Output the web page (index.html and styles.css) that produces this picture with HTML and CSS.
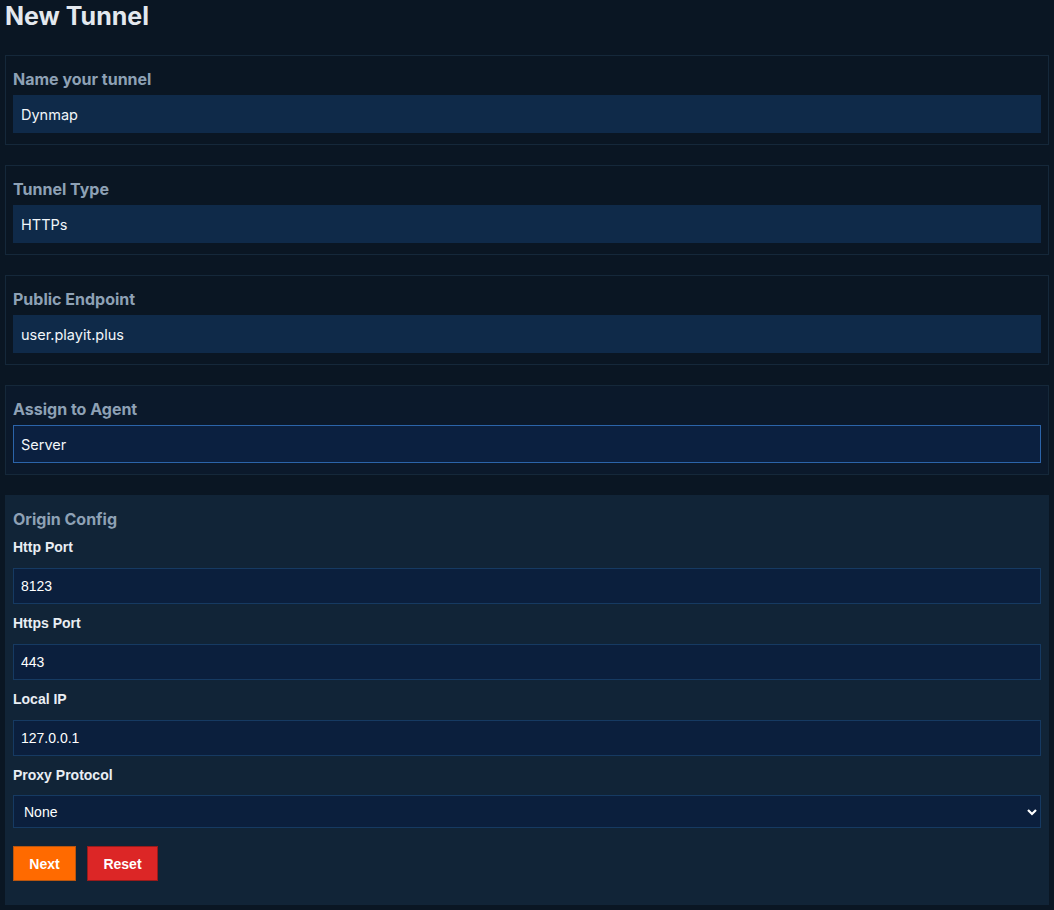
FILE: index.html
```html
<!DOCTYPE html>
<html lang="en">
<head>
<meta charset="utf-8">
<title>New Tunnel</title>
<link rel="stylesheet" href="styles.css">
</head>
<body>
<main class="page">
  <h1 class="page-title">New Tunnel</h1>

  <section class="card">
    <label class="card-label" for="tunnel-name">Name your tunnel</label>
    <input id="tunnel-name" class="field" type="text" value="Dynmap">
  </section>

  <section class="card">
    <label class="card-label" for="tunnel-type">Tunnel Type</label>
    <input id="tunnel-type" class="field" type="text" value="HTTPs">
  </section>

  <section class="card">
    <label class="card-label" for="endpoint">Public Endpoint</label>
    <input id="endpoint" class="field" type="text" value="user.playit.plus">
  </section>

  <section class="card card-active">
    <label class="card-label" for="agent">Assign to Agent</label>
    <input id="agent" class="field field-focused" type="text" value="Server">
  </section>

  <section class="origin">
    <h2 class="origin-title">Origin Config</h2>

    <label class="origin-label" for="http-port">Http Port</label>
    <input id="http-port" class="origin-input" type="text" value="8123">

    <label class="origin-label" for="https-port">Https Port</label>
    <input id="https-port" class="origin-input" type="text" value="443">

    <label class="origin-label" for="local-ip">Local IP</label>
    <input id="local-ip" class="origin-input" type="text" value="127.0.0.1">

    <label class="origin-label origin-label-select" for="proxy">Proxy Protocol</label>
    <div class="select-wrap">
      <select id="proxy" class="origin-select">
        <option>None</option>
      </select>
      <svg class="select-chevron" width="10" height="8" viewBox="0 0 10 8" aria-hidden="true">
        <path d="M1 2 L5 6 L9 2" fill="none" stroke="#ffffff" stroke-width="2.2"/>
      </svg>
    </div>

    <div class="actions">
      <button class="btn btn-next" type="button">Next</button>
      <button class="btn btn-reset" type="button">Reset</button>
    </div>
  </section>
</main>
</body>
</html>
```

FILE: styles.css
```css
html, body {
  margin: 0;
  padding: 0;
  background: #0a1623;
}

body {
  font-family: Inter, "Noto Sans", sans-serif;
  color: #e6edf5;
}

.page {
  padding: 0 5px 5px 5px;
  display: flex;
  flex-direction: column;
}

.page-title {
  margin: 0;
  font-size: 25px;
  font-weight: 700;
  line-height: 32px;
  color: #e3e8ee;
  height: 55px;
}

.card {
  display: flex;
  flex-direction: column;
  border: 1px solid #15283a;
  padding: 11px 7px 11px 7px;
  margin-bottom: 20px;
  background: #0a1623;
}

.card-active {
  background: #0b192b;
}

.card-label {
  font-size: 16px;
  font-weight: 700;
  line-height: 24px;
  color: #8ea1b5;
  margin-bottom: 4px;
}

.field {
  display: block;
  box-sizing: border-box;
  width: 100%;
  height: 38px;
  margin: 0;
  padding: 0 8px;
  border: none;
  outline: none;
  background: #0f2a49;
  color: #f2f6fa;
  font-family: Inter, "Noto Sans", sans-serif;
  font-size: 14.5px;
}

.field-focused {
  background: #0b2040;
  border: 1px solid #2b64a9;
  padding: 0 7px;
}

.origin {
  display: flex;
  flex-direction: column;
  background: #112437;
  padding: 12px 8px 24px 8px;
  margin-bottom: 0;
}

.origin-title {
  margin: 0 0 6px 0;
  font-size: 16px;
  font-weight: 700;
  line-height: 24px;
  color: #8ea1b5;
}

.origin-label {
  display: block;
  font-family: "Liberation Sans", Arial, sans-serif;
  font-size: 14px;
  font-weight: 700;
  line-height: 20px;
  color: #e9eef4;
  margin-bottom: 11px;
}

.origin-label-select {
  margin-bottom: 10px;
}

.origin-input {
  display: block;
  box-sizing: border-box;
  width: 100%;
  height: 36px;
  margin: 0 0 9px 0;
  padding: 0 7px;
  border: 1px solid #163a62;
  outline: none;
  background: #0b1f3d;
  color: #ffffff;
  font-family: "Liberation Sans", Arial, sans-serif;
  font-size: 14px;
}

.select-wrap {
  position: relative;
}

.origin-select {
  display: block;
  box-sizing: border-box;
  width: 100%;
  height: 33px;
  margin: 0;
  padding: 0 10px;
  border: 1px solid #163a62;
  outline: none;
  background: #0b1f3d;
  color: #ffffff;
  font-family: "Liberation Sans", Arial, sans-serif;
  font-size: 14px;
  appearance: none;
  -webkit-appearance: none;
}

.select-chevron {
  position: absolute;
  right: 4px;
  top: 13px;
  pointer-events: none;
}

.actions {
  display: flex;
  gap: 11px;
  margin-top: 18px;
}

.btn {
  height: 35px;
  padding: 0 14px;
  font-family: "Liberation Sans", Arial, sans-serif;
  font-size: 14px;
  font-weight: 700;
  color: #ffffff;
  cursor: pointer;
}

.btn-next {
  background: #ff6a00;
  border: 1px solid #b9560f;
  width: 63px;
}

.btn-reset {
  background: #dc2626;
  border: 1px solid #991b1b;
  width: 71px;
}
```
